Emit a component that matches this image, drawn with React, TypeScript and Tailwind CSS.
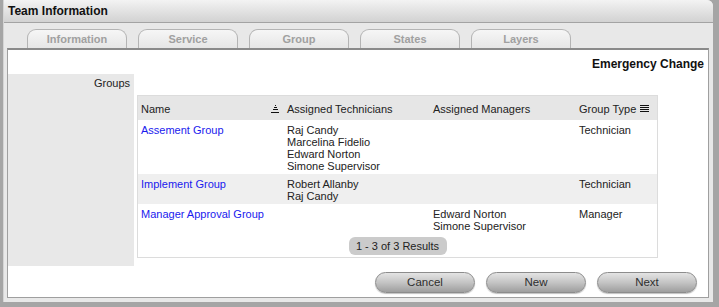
const tabs = ['Information', 'Service', 'Group', 'States', 'Layers']

const rows = [
  { name: 'Assement Group', techs: ['Raj Candy', 'Marcelina Fidelio', 'Edward Norton', 'Simone Supervisor'], managers: [], type: 'Technician', bg: 'bg-white' },
  { name: 'Implement Group', techs: ['Robert Allanby', 'Raj Candy'], managers: [], type: 'Technician', bg: 'bg-[#efefef]' },
  { name: 'Manager Approval Group', techs: [], managers: ['Edward Norton', 'Simone Supervisor'], type: 'Manager', bg: 'bg-white' },
]

const SortIcon = () => (
  <svg width="8" height="8" viewBox="0 0 8 8" className="shrink-0" shapeRendering="crispEdges">
    <path d="M3.5 0.5h1M2.5 2.5h3M1.5 4.5h5M0 7.5h8" stroke="#111" strokeWidth="1" fill="none" />
  </svg>
)

const ColsIcon = () => (
  <svg width="9" height="8" viewBox="0 0 9 8" className="shrink-0" shapeRendering="crispEdges">
    <path d="M0 0.5h9M0 2.5h9M0 4.5h9M0 6.5h9" stroke="#111" strokeWidth="1" fill="none" />
  </svg>
)

const Button = ({ label }: { label: string }) => (
  <button className="w-[100px] h-[21px] rounded-full border border-[#8c8c8c] bg-gradient-to-b from-[#e4e4e4] via-[#c4c4c4] to-[#9e9e9e] text-[11.5px] text-[#2e2e2e] shadow-[0_1px_1px_rgba(0,0,0,0.25)]">
    {label}
  </button>
)

export default function App() {
  return (
    <div className="w-[719px] h-[307px] bg-[#a5a5a5] pl-[3px] pr-[6px] pb-[5px] font-['Liberation_Sans',Arial,sans-serif] text-[#222]">
      <div className="h-full bg-[#e8e8e8] rounded-tr-[6px] border-l border-[#d4d4d4] flex flex-col">
        <div className="h-[23px] shrink-0 bg-gradient-to-b from-[#f3f3f3] to-[#d2d2d2] border-b border-[#a3a3a3] rounded-tr-[6px] px-[4px] flex items-center text-[12px] font-bold text-[#111]">
          Team Information
        </div>

        <div className="h-[25px] shrink-0 pt-[6px] pl-[23px] flex gap-[11px]">
          {tabs.map((t) => (
            <div
              key={t}
              className="w-[100px] h-[19px] rounded-t-[9px] border border-b-0 border-[#b4b4b4] bg-gradient-to-b from-[#f6f6f6] to-[#e6e6e6] flex items-center justify-center pt-[1px] text-[11px] font-bold text-[#a0a0a0]"
            >
              {t}
            </div>
          ))}
        </div>

        <div className="flex-1 mx-[3px] mr-[4px] mb-[4px] bg-white border-t-2 border-t-[#8a8a8a] border-x border-b border-x-[#9f9f9f] border-b-[#9f9f9f] flex flex-col pt-[7px] pb-[4px]">
          <div className="h-[14px] flex items-center justify-end pr-[4px] text-[12px] font-bold text-[#111]">
            Emergency Change
          </div>

          <div className="mt-[3px] flex-1 flex">
            <div className="w-[126px] bg-[#e8e8e8] text-right pr-[4px] pt-[3px] text-[11px] leading-[12px]">Groups</div>
            <div className="ml-[3px] pt-[21px] pb-[7px]">
              <div className="w-[521px] border border-[#dcdcdc] text-[11px] leading-[12px]">
                <div className="h-[24px] bg-[#e6e6e6] flex items-center pt-[2px]">
                  <div className="w-[146px] pl-[3px] pr-[5px] flex items-center justify-between">
                    <span>Name</span>
                    <SortIcon />
                  </div>
                  <div className="w-[146px] pl-[3px]">Assigned Technicians</div>
                  <div className="w-[146px] pl-[3px]">Assigned Managers</div>
                  <div className="flex-1 pl-[3px] pr-[8px] flex items-center justify-between">
                    <span>Group Type</span>
                    <ColsIcon />
                  </div>
                </div>

                {rows.map((r) => (
                  <div key={r.name} className={`${r.bg} flex pt-[4px] pb-[2px]`}>
                    <div className="w-[146px] pl-[3px] text-[#1a1aee]">{r.name}</div>
                    <div className="w-[146px] pl-[3px] flex flex-col">
                      {r.techs.map((n) => (
                        <span key={n}>{n}</span>
                      ))}
                    </div>
                    <div className="w-[146px] pl-[3px] flex flex-col">
                      {r.managers.map((n) => (
                        <span key={n}>{n}</span>
                      ))}
                    </div>
                    <div className="flex-1 pl-[3px]">{r.type}</div>
                  </div>
                ))}

                <div className="flex justify-center pt-[3px] pb-[2px]">
                  <div className="w-[98px] h-[18px] rounded-[6px] bg-[#cbcbcb] flex items-center justify-center">
                    1 - 3 of 3 Results
                  </div>
                </div>
              </div>
            </div>
          </div>

          <div className="mt-[6px] flex justify-end gap-[11px] pr-[11px]">
            <Button label="Cancel" />
            <Button label="New" />
            <Button label="Next" />
          </div>
        </div>
      </div>
    </div>
  )
}
